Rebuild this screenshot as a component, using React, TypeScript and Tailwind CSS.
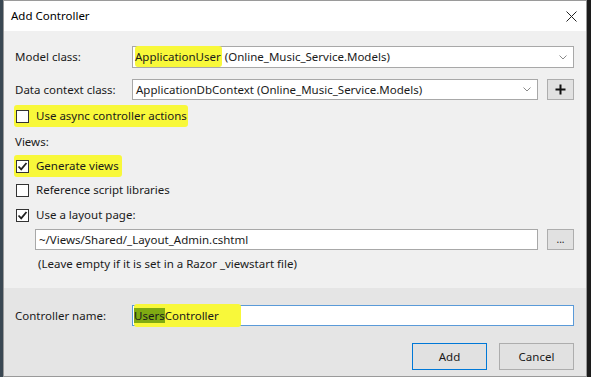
const font = { fontFamily: '"Noto Sans", "Open Sans", sans-serif' };

const Chevron = () => (
  <svg width="8" height="5" viewBox="0 0 8 5" className="shrink-0">
    <path d="M0.5 0.5 L4 4 L7.5 0.5" fill="none" stroke="#8a8a8a" strokeWidth="1" />
  </svg>
);

const CheckBox = ({ checked }: { checked?: boolean }) => (
  <div className="w-[13px] h-[13px] border border-[#333333] bg-white flex items-center justify-center shrink-0">
    {checked && (
      <svg width="11" height="11" viewBox="0 0 11 11">
        <path d="M1.5 5.5 L4.2 8.3 L9.5 2" fill="none" stroke="#222222" strokeWidth="1.8" />
      </svg>
    )}
  </div>
);

const Mark = ({ children, className = '' }: { children: React.ReactNode; className?: string }) => (
  <span className={`bg-[#f8f83a] rounded-[3px] ${className}`}>{children}</span>
);

const App = () => {
  return (
    <div className="w-[591px] h-[377px] flex bg-[#1c1c1c] overflow-hidden text-[11.5px] text-[#1a1a1a]" style={font}>
      <div className="w-[3px] bg-[#3a4853] shrink-0" />
      <div className="w-[584px] flex flex-col border border-[#9a9a9a] bg-[#f0f0f0]">
        {/* title bar */}
        <div className="h-[30px] bg-white flex items-center justify-between pl-[7px] pr-[9px] shrink-0">
          <span className="text-[11.5px] text-black">Add Controller</span>
          <svg width="11" height="11" viewBox="0 0 11 11">
            <path d="M0.5 0.5 L10.5 10.5 M10.5 0.5 L0.5 10.5" stroke="#222222" strokeWidth="1" />
          </svg>
        </div>

        {/* body */}
        <div className="flex flex-col pl-[11px] pr-[12px] pt-[15px] h-[257px]">
          <div className="flex items-center h-[22px]">
            <span className="w-[117px] shrink-0">Model class:</span>
            <div className="flex-1 h-[22px] bg-white border border-[#a8a8a8] flex items-center justify-between pl-[2px] pr-[6px]">
              <span className="whitespace-nowrap">
                <Mark className="py-[3px] pr-[1px]">ApplicationUser</Mark> (Online_Music_Service.Models)
              </span>
              <Chevron />
            </div>
          </div>

          <div className="flex items-center h-[21px] mt-[11px]">
            <span className="w-[117px] shrink-0">Data context class:</span>
            <div className="w-[406px] h-[21px] bg-white border border-[#a8a8a8] flex items-center justify-between pl-[3px] pr-[6px]">
              <span className="whitespace-nowrap">ApplicationDbContext (Online_Music_Service.Models)</span>
              <Chevron />
            </div>
            <div className="ml-auto w-[27px] h-[21px] bg-[#e1e1e1] border border-[#adadad] flex items-center justify-center">
              <svg width="11" height="11" viewBox="0 0 11 11">
                <path d="M5.5 0.5 V10.5 M0.5 5.5 H10.5" stroke="#111111" strokeWidth="2" />
              </svg>
            </div>
          </div>

          <div className="flex items-center h-[20px] mt-[6px]">
            <Mark className="flex items-center gap-[7px] pl-[2px] pr-[1px] py-[2px] -ml-[1px]">
              <CheckBox />
              <span>Use async controller actions</span>
            </Mark>
          </div>

          <div className="flex items-center h-[20px] mt-[6px]">
            <span>Views:</span>
          </div>

          <div className="flex items-center h-[20px] mt-[4px]">
            <Mark className="flex items-center gap-[7px] pl-[2px] pr-[3px] py-[2px] -ml-[1px]">
              <CheckBox checked />
              <span>Generate views</span>
            </Mark>
          </div>

          <div className="flex items-center h-[20px] mt-[4px] pl-[1px] gap-[7px]">
            <CheckBox />
            <span>Reference script libraries</span>
          </div>

          <div className="flex items-center h-[20px] mt-[5px] pl-[1px] gap-[7px]">
            <CheckBox checked />
            <span>Use a layout page:</span>
          </div>

          <div className="flex items-center h-[21px] mt-[4px] pl-[20px]">
            <div className="w-[503px] h-[21px] bg-white border border-[#a8a8a8] flex items-center pl-[3px]">
              <span className="whitespace-nowrap">~/Views/Shared/_Layout_Admin.cshtml</span>
            </div>
            <div className="ml-auto w-[27px] h-[21px] bg-[#e1e1e1] border border-[#adadad] flex items-center justify-center">
              <span className="text-[10px] leading-none pb-[2px]">...</span>
            </div>
          </div>

          <div className="flex items-center h-[20px] mt-[4px] pl-[23px]">
            <span>(Leave empty if it is set in a Razor _viewstart file)</span>
          </div>
        </div>

        {/* footer */}
        <div className="flex-1 bg-[#e5e5e5] flex flex-col pl-[11px] pr-[12px] pt-[17px]">
          <div className="flex items-center h-[21px]">
            <span className="w-[117px] shrink-0">Controller name:</span>
            <div className="flex-1 h-[21px] bg-white border border-[#5a9ad8] flex items-center pl-[1px]">
              <span className="whitespace-nowrap bg-[#f8f83a] rounded-[3px] pr-[22px] py-[3px]">
                <span className="bg-[#7faa12]">Users</span>Controller
              </span>
            </div>
          </div>

          <div className="flex justify-end gap-[12px] mt-[17px]">
            <div className="w-[75px] h-[27px] bg-[#e1e1e1] border border-[#0078d7] flex items-center justify-center">
              Add
            </div>
            <div className="w-[75px] h-[27px] bg-[#e1e1e1] border border-[#adadad] flex items-center justify-center">
              Cancel
            </div>
          </div>
        </div>
      </div>
      <div className="w-[4px] bg-[#1c1c1c] shrink-0" />
    </div>
  );
};

export default App;
